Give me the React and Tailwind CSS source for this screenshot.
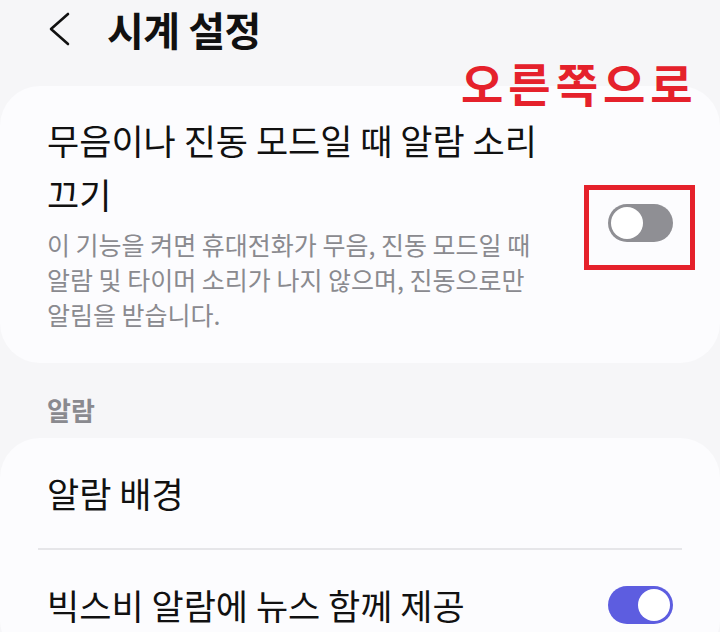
import React from "react";

const font = { fontFamily: '"Noto Sans CJK KR", "Noto Sans", sans-serif' };

function Toggle({ on }) {
  return on ? (
    <div className="flex h-[38px] w-[65px] shrink-0 items-center justify-end rounded-full bg-[#5d5de0] p-[3px]">
      <div className="h-[32px] w-[32px] rounded-full bg-white" />
    </div>
  ) : (
    <div className="flex h-[38px] w-[65px] shrink-0 items-center rounded-full bg-[#8f8f94] p-[3px]">
      <div className="h-[32px] w-[32px] rounded-full bg-white" />
    </div>
  );
}

export default function App() {
  return (
    <div
      className="relative h-[632px] w-[720px] overflow-hidden break-keep bg-[#f6f6f8] text-[#111111]"
      style={font}
    >
      {/* Header */}
      <div className="flex h-[86px] items-start">
        <div className="flex h-[58px] items-center pl-[48px]">
          <svg width="24" height="34" viewBox="0 0 24 34" className="shrink-0">
            <polyline
              points="20,2 3,17 20,32"
              fill="none"
              stroke="#111"
              strokeWidth="2.6"
              strokeLinecap="round"
              strokeLinejoin="round"
            />
          </svg>
          <h1 className="ml-[35px] text-[40px] font-bold leading-none tracking-[-0.5px]">
            시계 설정
          </h1>
        </div>
      </div>

      {/* Card 1 */}
      <div className="flex items-center rounded-[40px] bg-[#fcfcfe] pb-[31px] pl-[47px] pr-[47px] pt-[27px]">
        <div className="w-[510px] break-keep">
          <div className="text-[35px] leading-[54px]">
            무음이나 진동 모드일 때 알람 소리 끄기
          </div>
          <div className="mt-[6px] text-[25px] leading-[35px] text-[#8a8a8f]">
            이 기능을 켜면 휴대전화가 무음, 진동 모드일 때 알람 및 타이머
            소리가 나지 않으며, 진동으로만 알림을 받습니다.
          </div>
        </div>
        <div className="ml-auto">
          <Toggle on={false} />
        </div>
      </div>

      {/* Section header */}
      <div className="pb-[10px] pl-[47px] pt-[29px] text-[26px] font-bold leading-[36px] text-[#8a8a8f]">
        알람
      </div>

      {/* Card 2 */}
      <div className="rounded-[40px] bg-[#fcfcfe]">
        <div className="flex h-[110px] items-center px-[47px] text-[35px]">
          알람 배경
        </div>
        <div className="mx-[38px] h-[2px] bg-[#e6e6e9]" />
        <div className="flex h-[110px] items-center justify-between px-[47px]">
          <span className="text-[35px]">빅스비 알람에 뉴스 함께 제공</span>
          <Toggle on={true} />
        </div>
      </div>

      {/* Annotations */}
      <div className="absolute left-[461px] top-[59px] text-[46px] font-bold leading-none tracking-[5px] text-[#e5212b]">
        오른쪽으로
      </div>
      <div className="absolute left-[584px] top-[185px] h-[85px] w-[111px] border-[5px] border-[#e5212b]" />
    </div>
  );
}
